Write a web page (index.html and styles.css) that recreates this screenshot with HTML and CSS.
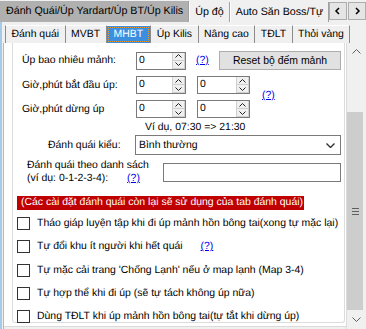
FILE: index.html
```
<!DOCTYPE html>
<html lang="vi">
<head>
  <meta charset="UTF-8" />
  <title>MHBT</title>
  <link rel="stylesheet" href="styles.css">
</head>
<body>
  <div class="outer-strip">
    <div class="outer-tabs">
      <div class="otab active">Đánh Quái/Úp Yardart/Úp BT/Úp Kilis</div>
      <div class="otab">Úp độ</div>
      <div class="otab">Auto Săn Boss/Tự</div>
    </div>
    <div class="tab-scroll">
      <span><svg width="8" height="8" viewBox="0 0 8 8"><polyline points="5,1 2,4 5,7" /></svg></span>
      <span><svg width="8" height="8" viewBox="0 0 8 8"><polyline points="3,1 6,4 3,7" /></svg></span>
    </div>
  </div>

  <div class="outer-page">
    <div class="inner-strip">
      <div class="itab first">Đánh quái</div>
      <div class="itab">MVBT</div>
      <div class="itab active"><span>MHBT</span></div>
      <div class="itab">Úp Kilis</div>
      <div class="itab">Nâng cao</div>
      <div class="itab">TĐLT</div>
      <div class="itab">Thỏi vàng</div>
    </div>

    <div class="inner-page">
      <div class="panel">
        <div class="group">
          <div class="row1">
            <span>Úp bao nhiêu mảnh:</span>
            <div class="spin">
              <span class="val">0</span>
              <span class="arrows">
                <i><svg width="7" height="4" viewBox="0 0 7 4"><polyline points="0.5,3.5 3.5,0.5 6.5,3.5" /></svg></i>
                <i><svg width="7" height="4" viewBox="0 0 7 4"><polyline points="0.5,0.5 3.5,3.5 6.5,0.5" /></svg></i>
              </span>
            </div>
            <a class="help">(?)</a>
            <button class="btn">Reset bộ đếm mảnh</button>
          </div>

          <div class="times">
            <span class="t1">Giờ,phút bắt đầu úp:</span>
            <div class="spin a1">
              <span class="val">0</span>
              <span class="arrows">
                <i><svg width="7" height="4" viewBox="0 0 7 4"><polyline points="0.5,3.5 3.5,0.5 6.5,3.5" /></svg></i>
                <i><svg width="7" height="4" viewBox="0 0 7 4"><polyline points="0.5,0.5 3.5,3.5 6.5,0.5" /></svg></i>
              </span>
            </div>
            <div class="spin a2">
              <span class="val">0</span>
              <span class="arrows">
                <i><svg width="7" height="4" viewBox="0 0 7 4"><polyline points="0.5,3.5 3.5,0.5 6.5,3.5" /></svg></i>
                <i><svg width="7" height="4" viewBox="0 0 7 4"><polyline points="0.5,0.5 3.5,3.5 6.5,0.5" /></svg></i>
              </span>
            </div>
            <a class="help span2">(?)</a>
            <span class="t2">Giờ,phút dừng úp</span>
            <div class="spin b1">
              <span class="val">0</span>
              <span class="arrows">
                <i><svg width="7" height="4" viewBox="0 0 7 4"><polyline points="0.5,3.5 3.5,0.5 6.5,3.5" /></svg></i>
                <i><svg width="7" height="4" viewBox="0 0 7 4"><polyline points="0.5,0.5 3.5,3.5 6.5,0.5" /></svg></i>
              </span>
            </div>
            <div class="spin b2">
              <span class="val">0</span>
              <span class="arrows">
                <i><svg width="7" height="4" viewBox="0 0 7 4"><polyline points="0.5,3.5 3.5,0.5 6.5,3.5" /></svg></i>
                <i><svg width="7" height="4" viewBox="0 0 7 4"><polyline points="0.5,0.5 3.5,3.5 6.5,0.5" /></svg></i>
              </span>
            </div>
          </div>

          <div class="example">Ví dụ, 07:30 =&gt; 21:30</div>

          <div class="mode-row">
            <span class="mode-label">Đánh quái kiểu:</span>
            <div class="select">
              <span>Bình thường</span>
              <svg width="9" height="5" viewBox="0 0 9 5"><polyline points="0.5,0.5 4.5,4.5 8.5,0.5" /></svg>
            </div>
          </div>

          <div class="list-row">
            <div class="list-label">
              <div>Đánh quái theo danh sách</div>
              <div>(ví dụ: 0-1-2-3-4): <a class="help">(?)</a></div>
            </div>
            <div class="textbox"></div>
          </div>

          <div class="notice">(Các cài đặt đánh quái còn lại sẽ sử dụng của tab đánh quái)</div>

          <div class="checks">
            <label class="check"><span class="box"></span>Tháo giáp luyện tập khi đi úp mảnh hồn bông tai(xong tự mặc lại)</label>
            <label class="check"><span class="box"></span>Tự đổi khu ít người khi hết quái <a class="help">(?)</a></label>
            <label class="check"><span class="box"></span>Tự mặc cải trang 'Chống Lạnh' nếu ở map lạnh (Map 3-4)</label>
            <label class="check"><span class="box"></span>Tự hợp thể khi đi úp (sẽ tự tách không úp nữa)</label>
            <label class="check"><span class="box"></span>Dùng TĐLT khi úp mảnh hồn bông tai(tự tắt khi dừng úp)</label>
          </div>
        </div>
      </div>

      <div class="vscroll">
        <div class="arrow"><svg width="9" height="5" viewBox="0 0 9 5"><polyline points="0.5,4.5 4.5,0.5 8.5,4.5" /></svg></div>
        <div class="track"></div>
        <div class="thumb"><span></span><span></span><span></span></div>
        <div class="arrow"><svg width="9" height="5" viewBox="0 0 9 5"><polyline points="0.5,0.5 4.5,4.5 8.5,0.5" /></svg></div>
      </div>
    </div>
  </div>
</body>
</html>
```

FILE: styles.css
```
body {
  margin: 0;
  width: 366px;
  height: 329px;
  overflow: hidden;
  background: #f0f0f0;
  font-family: "Liberation Sans", Arial, sans-serif;
  font-size: 10.7px;
  color: #000;
  text-rendering: geometricPrecision;
}

svg polyline {
  fill: none;
  stroke: #222;
  stroke-width: 1;
}

/* outer tab strip */
.outer-strip {
  display: flex;
  height: 22px;
}

.outer-tabs {
  display: flex;
  align-items: flex-end;
  flex: 1;
  min-width: 0;
  overflow: hidden;
}

.otab {
  height: 20px;
  line-height: 20px;
  padding: 0 5px;
  white-space: nowrap;
  box-sizing: border-box;
  border-left: 1px solid #fff;
  border-right: 1px solid #a0a0a0;
}

.otab.active {
  height: 21px;
  line-height: 21px;
  width: 197px;
  padding-left: 6px;
  background: #b0b0b0;
  border-left: none;
}

.tab-scroll {
  display: flex;
  gap: 1px;
  padding-top: 2px;
}

.tab-scroll span {
  width: 16px;
  height: 16px;
  border: 1px solid #adadad;
  background: #e5e5e5;
  display: flex;
  align-items: center;
  justify-content: center;
}

.tab-scroll polyline {
  stroke: #000;
  stroke-width: 1.5;
}

/* outer page */
.outer-page {
  height: 307px;
  border-left: 2px solid #a6cbe9;
  display: flex;
  flex-direction: column;
  font-size: 10.45px;
}

.inner-strip {
  height: 21px;
  display: flex;
  align-items: flex-end;
  padding-left: 3px;
}

.itab {
  height: 18px;
  line-height: 18px;
  padding: 0 5.5px;
  white-space: nowrap;
  box-sizing: border-box;
  border-right: 1px solid #8c8c8c;
  border-top: 1px solid #fff;
}

.itab.first {
  border-left: 1px solid #8c8c8c;
}

.itab.active {
  padding: 1px;
  background: #3b8fde;
  color: #fff;
}

.itab.active span {
  display: block;
  height: 100%;
  line-height: 14px;
  padding: 0 5px;
  box-sizing: border-box;
  border: 1px dotted #e59a3a;
}

.inner-page {
  display: flex;
  align-items: flex-start;
  margin-left: 1px;
  border-left: 1px solid #b8b8b8;
}

.panel {
  flex: 1;
  height: 283px;
  background: #fff;
  border-bottom: 1px solid #dadada;
  padding: 0 1px 0 8px;
}

.group {
  height: 280px;
  box-sizing: border-box;
  border: 1px solid #dcdcdc;
  border-top: none;
  border-radius: 0 0 3px 3px;
  padding: 8px 0 0 9px;
}

/* form rows */
.row1 {
  display: grid;
  grid-template-columns: 114px 50px 33px 122px;
  align-items: center;
  height: 18px;
}

.help {
  color: #0000ee;
  text-decoration: underline;
}

.row1 .help {
  padding-left: 10px;
}

.btn {
  height: 19px;
  padding: 0;
  font: inherit;
  color: #000;
  background: #e1e1e1;
  border: 1px solid #adadad;
}

.spin {
  display: flex;
  height: 18px;
  box-sizing: border-box;
  border: 1px solid #7a7a7a;
  background: #fff;
}

.spin .val {
  flex: 1;
  line-height: 16px;
  padding-left: 2px;
}

.spin .arrows {
  width: 13px;
  display: flex;
  flex-direction: column;
}

.spin i {
  flex: 1;
  display: flex;
  align-items: center;
  justify-content: center;
  background: #f0f0f0;
  border: 1px solid #cfcfcf;
  border-top: none;
}

.times {
  display: grid;
  grid-template-columns: 114px 50px 11px 53px 12px auto;
  grid-template-rows: 18px 18px;
  row-gap: 6px;
  align-items: center;
  margin-top: 7px;
}

.times .t1 { grid-column: 1; grid-row: 1; }
.times .a1 { grid-column: 2; grid-row: 1; }
.times .a2 { grid-column: 4; grid-row: 1; }
.times .t2 { grid-column: 1; grid-row: 2; }
.times .b1 { grid-column: 2; grid-row: 2; }
.times .b2 { grid-column: 4; grid-row: 2; }

.times .help.span2 {
  grid-column: 6;
  grid-row: 1 / 3;
  margin-top: -3px;
}

.example {
  margin-top: 3px;
  padding-left: 123px;
  line-height: 13px;
}

.mode-row {
  display: grid;
  grid-template-columns: 113px 206px;
  align-items: center;
  margin-top: 1px;
}

.mode-label {
  padding-left: 26px;
}

.select {
  height: 20px;
  box-sizing: border-box;
  border: 1px solid #7a7a7a;
  display: flex;
  align-items: center;
  justify-content: space-between;
  padding: 0 5px 0 3px;
}

.select polyline {
  stroke: #333;
  stroke-width: 1.4;
}

.list-row {
  display: grid;
  grid-template-columns: 141px 178px;
  align-items: center;
  margin-top: 4px;
}

.list-label {
  padding-left: 5px;
  line-height: 13px;
}

.list-label .help {
  margin-left: 16px;
}

.textbox {
  height: 19px;
  box-sizing: border-box;
  border: 1px solid #7a7a7a;
}

.notice {
  width: fit-content;
  margin: 11px 0 0 -5px;
  padding: 0 1px 0 4px;
  line-height: 14px;
  background: #c00000;
  color: #fff;
}

.checks {
  display: flex;
  flex-direction: column;
  gap: 10.25px;
  margin: 7px 0 0 -5px;
}

.check {
  display: flex;
  align-items: center;
  height: 13px;
  white-space: nowrap;
}

.check .box {
  width: 13px;
  height: 13px;
  box-sizing: border-box;
  border: 1px solid #333;
  background: #fff;
  margin-right: 7px;
  flex: none;
}

.check .help {
  margin-left: 18px;
}

/* vertical scrollbar */
.vscroll {
  width: 20px;
  height: 286px;
  box-sizing: border-box;
  background: #f0f0f0;
  border-left: 1px solid #dcdcdc;
  display: flex;
  flex-direction: column;
}

.vscroll .arrow {
  height: 17px;
  display: flex;
  align-items: center;
  justify-content: center;
}

.vscroll .arrow polyline {
  stroke: #606060;
}

.vscroll .track {
  height: 52px;
}

.vscroll .thumb {
  height: 198px;
  margin: 0 3px 1px 0;
  background: #cdcdcd;
  display: flex;
  flex-direction: column;
  align-items: center;
  justify-content: center;
  gap: 2px;
}

.vscroll .thumb span {
  width: 7px;
  height: 1px;
  background: #606060;
}
```
